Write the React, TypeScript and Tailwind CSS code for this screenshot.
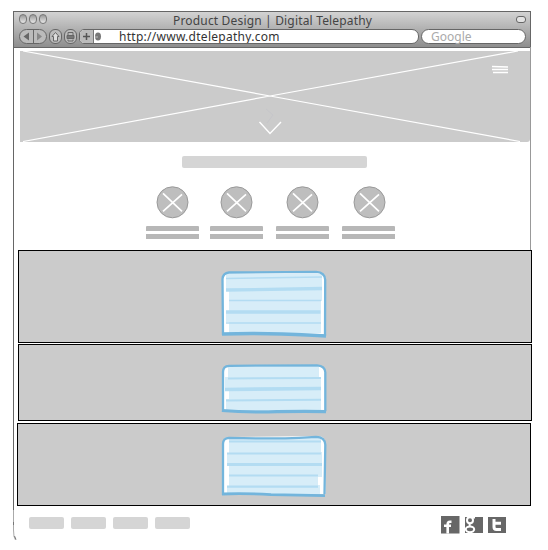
import type { ReactNode } from "react";

const uiFont = "font-['Noto_Sans','Open_Sans',sans-serif]";

function TrafficLight() {
  return (
    <span className="h-[10px] w-2 rounded-full border border-[#777] bg-linear-to-b from-[#999] to-[#e8e8e8]" />
  );
}

function TitleBar() {
  return (
    <header className="ml-[13px] h-[37px] w-[518px] border border-b border-[#666] bg-linear-to-b from-[#d3d3d3] to-[#8e8e8e]">
      <div className="flex h-[17px] items-start">
        <div className="flex w-[159px] gap-[2px] pt-[2px] pl-[5px]">
          <TrafficLight />
          <TrafficLight />
          <TrafficLight />
        </div>
        <h1 className={`w-[319px] pt-px text-[12px] leading-4 tracking-[0.17px] whitespace-nowrap text-[#444] ${uiFont}`}>
          Product Design | Digital Telepathy
        </h1>
        <span className="mt-[4px] ml-[24px] h-[7px] w-[10px] rounded-[3px] border border-[#666] bg-[#e2e2e2]" />
      </div>
      <div className="flex h-[15px] pl-[5px]">
        <svg className="h-[15px] w-[60px] shrink-0" viewBox="0 0 60 15" fill="none" stroke="#666">
          <rect x=".5" y=".5" width="27" height="14" rx="7" fill="#bbb" />
          <path d="M14.5 1v13" />
          <path d="M10 3.5v8L4.5 7.5z" fill="#666" stroke="none" />
          <path d="M18 3.5v8l5-4z" fill="#888" stroke="none" />
          <rect x="30.500" y=".5" width="12" height="14" rx="5.500" fill="#bbb" />
          <path d="M33 7.500 36.500 3.500 40 7.500h-1.500V12h-4V7.500z" fill="#ddd" />
          <rect x="45.500" y=".5" width="12" height="14" rx="5.500" fill="#bbb" />
          <path d="M49 6V3.500h5V6M49 10.500v1.500h5v-1.500" />
          <path d="M48 6.500h7v3h-7z" fill="#777" />
        </svg>
        <div className="flex w-[340px] shrink-0 overflow-hidden rounded-l-[5px] rounded-r-[7px] border border-[#666] bg-white">
          <svg className="h-[13px] w-[22px] shrink-0" viewBox="0 0 22 13">
            <path d="M0 0h13v13H0z" fill="#bbb" />
            <path d="M13.500 0v13" stroke="#777" />
            <path d="M3 6.500h7M6.500 3v7" stroke="#555" strokeWidth="1.500" />
            <ellipse cx="18" cy="6.500" rx="3" ry="4" fill="#777" />
            <path d="M15 7h3" stroke="#bbb" />
          </svg>
          <span className={`ml-[17px] text-[12px] leading-[14px] tracking-[0.27px] whitespace-nowrap text-[#333] ${uiFont}`}>
            http://www.dtelepathy.com
          </span>
        </div>
        <div className={`ml-[2px] w-[105px] shrink-0 rounded-full border border-[#666] bg-white pl-[9px] text-[12px] leading-[14px] text-[#aaa] ${uiFont}`}>
          Google
        </div>
      </div>
    </header>
  );
}

function Hero() {
  return (
    <section className="mt-[3px] ml-[20px] h-[91px] w-[510px] rounded-br-[3px] bg-[#cbcbcb]">
      <svg className="h-[91px] w-[510px]" viewBox="0 0 510 91" fill="none" stroke="#fff">
        <path d="M3 0 250 45 500 90.500M3 90.500 250 45 498 0" strokeWidth="1.200" />
        <path d="m246 58 7 6-6 8" stroke="#c6c6ca" />
        <path d="m239.500 71 10.500 11.500L261 71" strokeWidth="1.400" />
        <path d="M472 15.500l16 .5M472 18.500h16M473 21.500h15" strokeWidth="1.500" />
      </svg>
    </section>
  );
}

function Feature({ className, cx = 26.5 }: { className: string; cx?: number }) {
  return (
    <div className={`w-[53px] ${className}`}>
      <svg className="h-[34px] w-[53px]" viewBox="0 0 53 34" fill="none">
        <g transform={`translate(${cx} 17.300)`}>
          <circle r="15.500" fill="#bebebe" stroke="#999" />
          <path d="m-9.500-9 19 18M-9.500 9 9.500-8" stroke="#fff" strokeWidth="1.700" />
        </g>
      </svg>
      <div className="mt-[7px] h-[5px] rounded-t-[1px] bg-[#b7b7b7]" />
      <div className="mt-[3px] h-[5px] bg-[#b7b7b7]" />
    </div>
  );
}

function Panel({ className, children }: { className: string; children: ReactNode }) {
  return (
    <section className={`w-[514px] border border-black bg-[#cbcbcb] ${className}`}>
      <svg className="h-full w-[512px]" fill="none">
        {children}
      </svg>
    </section>
  );
}

function Footer() {
  return (
    <footer className="mt-[10px] ml-[29px] flex w-[477px] items-start">
      <div className="mt-px flex gap-[7px]">
        <span className="h-3 w-[35px] rounded-[2px] bg-[#d5d5d5]" />
        <span className="h-3 w-[35px] rounded-[2px] bg-[#d5d5d5]" />
        <span className="h-3 w-[35px] rounded-[2px] bg-[#d5d5d5]" />
        <span className="h-3 w-[35px] rounded-[2px] bg-[#d5d5d5]" />
      </div>
      <svg className="ml-auto h-[18px] w-[65px]" viewBox="0 0 65 18" fill="none">
        <path d="M0 0h18.500v17.500H0zM24 1h18v16H24zM47 1h18v16H47z" fill="#676767" />
        <path d="M10.500 5.800H9Q6.700 5.800 6.700 8.300v9.200M3 9.700h7" stroke="#fff" strokeWidth="2.600" />
        <ellipse cx="29" cy="4.300" rx="3" ry="3" stroke="#fff" strokeWidth="2" />
        <path d="M31 1.500h3M30 7.500q-3 1.200-.5 2.700" stroke="#fff" strokeWidth="1.800" />
        <ellipse cx="29" cy="13.300" rx="4.200" ry="2.900" stroke="#fff" strokeWidth="2" />
        <path d="M53 3v8q0 2.500 2.500 2.500H60M53 7.200h7" stroke="#fff" strokeWidth="3" />
      </svg>
    </footer>
  );
}

export default function App() {
  return (
    <div className="relative h-[550px] w-[548px] overflow-hidden bg-white pt-[11px]">
      <svg className="absolute top-0 left-0 h-[550px] w-[548px]" fill="none">
        <path d="M13.500 47v463" stroke="#666" />
        <path d="M13.500 510v20q0 8 2 10" stroke="#aaa" />
        <path d="M13.500 522v3M14.500 536l1.500 3.500" stroke="#777" />
        <path d="M530.500 47v203" stroke="#999" />
      </svg>
      <TitleBar />
      <Hero />
      <div className="mt-[14px] ml-[182px] h-[12px] w-[185px] rounded-[2px] bg-[#d5d5d5]" />
      <div className="mt-[17px] ml-[146px] flex h-[65px]">
        <Feature className="" />
        <Feature className="ml-[11px]" />
        <Feature className="ml-[13px]" />
        <Feature className="ml-[13px]" cx={27.5} />
      </div>
      <Panel className="ml-[18px] h-[93px]">
        <g transform="translate(191 19)">
          <path d="M12.500 6Q13 3 17 2.500L107 2q8 0 8.500 6v57L13 63z" fill="#fff" />
          <path d="M16 4h96v27h-1v32H19V52h-3V42h3V21h-3z" fill="#d7edf8" />
          <path d="M16 8.500l96-1.500M19 30.500h92M16 53h95" stroke="#b3dcf2" strokeWidth="1.500" />
          <path d="M16 20l96-1.500M16 42h94.500" stroke="#b3dcf2" strokeWidth="3.300" />
          <path d="M13 65 12.500 9Q13 3 19 2.500L106 1.800q9 .5 9.200 8L115 66" stroke="#73b5dc" strokeWidth="2.300" />
          <path d="M12 64q31-1 60 0t44 2" stroke="#73b5dc" strokeWidth="3.300" />
        </g>
      </Panel>
      <Panel className="mt-px ml-[18px] h-[77px]">
        <g transform="translate(191 0)">
          <path d="M13 27q0-6 5-6h90q7 0 7.500 6v39H13z" fill="#fff" />
          <path d="M18 22h91v10h2v33H16V54h3V45h-4V32h3z" fill="#d7edf8" />
          <path d="M18 33.500l93-.5M16 55.500l95-.8" stroke="#b3dcf2" strokeWidth="2" />
          <path d="M15 44.500l96-1" stroke="#b3dcf2" strokeWidth="3.700" />
          <path d="M13 67V27q0-6 6-6.200L107 20.300q8 .5 8.300 7v39" stroke="#73b5dc" strokeWidth="2.300" />
          <path d="M12 65.500q24 2 55 1.200t49 0" stroke="#73b5dc" strokeWidth="3.200" />
        </g>
      </Panel>
      <Panel className="mt-[2px] ml-[17px] h-[83px]">
        <g transform="translate(192 1)">
          <path d="M13 18q0-6 5-6l90-1q7 0 7.500 7v51L13 68z" fill="#fff" />
          <path d="M19 13h92v14h1v25h-4v8h2v9H17v-8h2V41h-2V28h2z" fill="#d7edf8" />
          <path d="M19 16.500h92M17 28.500h94M19 50.500h89M17 61.700h91" stroke="#b3dcf2" strokeWidth="2.200" />
          <path d="M17 39.500h95" stroke="#b3dcf2" strokeWidth="3.200" />
          <path d="M13 70V19q0-6 6-6.200 45 1.200 70 0l17-1q9 0 9.300 8L114.500 69" stroke="#73b5dc" strokeWidth="2.300" />
          <path d="M12 69q22-1 49 .7l54 1" stroke="#73b5dc" strokeWidth="2.800" />
        </g>
      </Panel>
      <Footer />
    </div>
  );
}
